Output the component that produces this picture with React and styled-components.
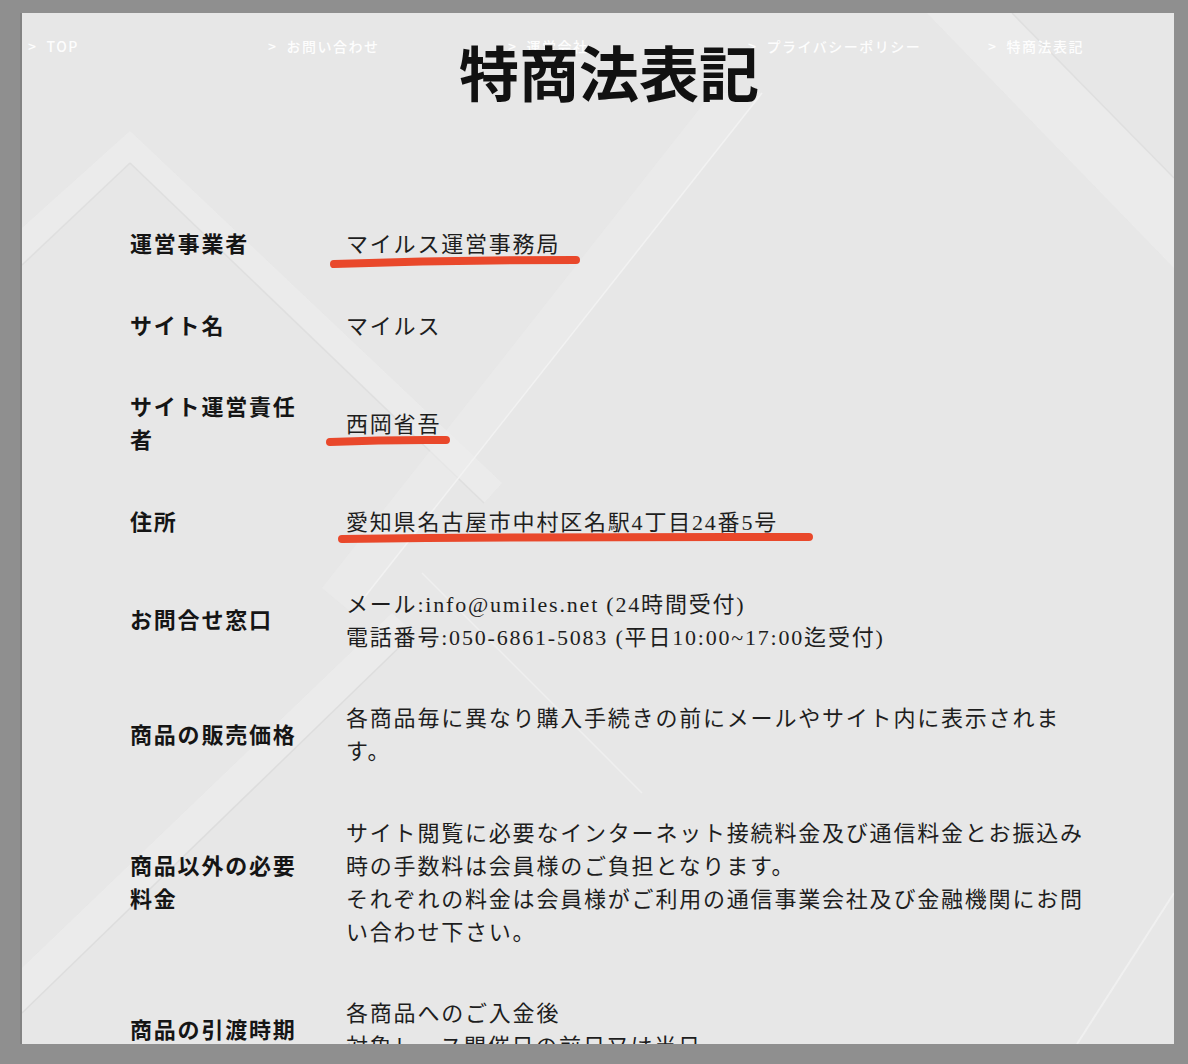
import React from 'react';
import styled, { createGlobalStyle } from 'styled-components';

const GlobalStyle = createGlobalStyle`
  html, body {
    margin: 0;
    padding: 0;
    background: #8f8f8f;
  }
  body {
    font-family: "Liberation Serif", "Noto Sans CJK JP", serif;
    color: #1c1c1c;
  }
`;

const Frame = styled.div`
  box-sizing: border-box;
  width: 1188px;
  height: 1064px;
  padding: 13px 14px 20px 22px;
`;

const Page = styled.div`
  position: relative;
  width: 1152px;
  height: 1031px;
  overflow: hidden;
  background: #e7e7e7;
  box-shadow: -2px 0 0 rgba(0, 0, 0, 0.08);
`;

const Backdrop = styled.svg`
  position: absolute;
  inset: 0;
  z-index: 0;
`;

const Nav = styled.nav`
  position: absolute;
  top: 22px;
  left: 0;
  z-index: 1;
  display: flex;
`;

const NavItem = styled.a`
  box-sizing: border-box;
  width: 240px;
  padding-left: 6px;
  font-family: "Noto Sans CJK JP", sans-serif;
  font-size: 14px;
  line-height: 22px;
  font-weight: 500;
  letter-spacing: 1.5px;
  color: rgba(255, 255, 255, 0.95);
  text-decoration: none;
`;

const Chevron = styled.span`
  margin-right: 9px;
`;

const Content = styled.main`
  position: relative;
  z-index: 2;
  padding-top: 28px;
`;

const Title = styled.h1`
  margin: 0 0 103px;
  padding-left: 22px;
  text-align: center;
  font-family: "Noto Sans CJK JP", sans-serif;
  font-size: 60px;
  line-height: 60px;
  font-weight: 700;
  color: #111;
`;

const Table = styled.dl`
  margin: 0 0 0 108px;
`;

const Row = styled.div`
  display: grid;
  grid-template-columns: 180px 748px;
  column-gap: 36px;
  align-items: center;
  padding: 24.3px 0;
  font-size: 22px;
  line-height: 33px;
  letter-spacing: 1.8px;
`;

const Label = styled.dt`
  margin: 0;
  font-weight: 700;
  color: #151515;
`;

const Value = styled.dd`
  position: relative;
  margin: 0;
  color: #1e1e1e;
`;

const Marker = styled.svg`
  position: absolute;
  left: ${p => p.$left}px;
  top: ${p => p.$top}px;
  overflow: visible;
  pointer-events: none;
`;

const Underline = ({ left, top, width, tilt = 1 }) => (
  <Marker $left={left} $top={top} width={width} height={12} viewBox={`0 0 ${width} 12`}>
    <path
      d={`M4 ${6 + tilt} Q ${width / 2} ${5 - tilt / 2} ${width - 4} ${6 - tilt}`}
      stroke="#e9482b"
      strokeWidth="8"
      strokeLinecap="round"
      fill="none"
    />
  </Marker>
);

const navLinks = ['TOP', 'お問い合わせ', '運営会社', 'プライバシーポリシー', '特商法表記'];

const rows = [
  { label: '運営事業者', value: ['マイルス運営事務局'], mark: { left: -16, top: 28, width: 250, tilt: 2 } },
  { label: 'サイト名', value: ['マイルス'] },
  { label: 'サイト運営責任者', value: ['西岡省吾'], mark: { left: -20, top: 27, width: 124, tilt: 1 } },
  { label: '住所', value: ['愛知県名古屋市中村区名駅4丁目24番5号'], mark: { left: -8, top: 26, width: 475, tilt: 1 } },
  {
    label: 'お問合せ窓口',
    value: ['メール:info@umiles.net (24時間受付)', '電話番号:050-6861-5083 (平日10:00~17:00迄受付)'],
  },
  { label: '商品の販売価格', value: ['各商品毎に異なり購入手続きの前にメールやサイト内に表示されます。'] },
  {
    label: '商品以外の必要料金',
    value: [
      'サイト閲覧に必要なインターネット接続料金及び通信料金とお振込み時の手数料は会員様のご負担となります。',
      'それぞれの料金は会員様がご利用の通信事業会社及び金融機関にお問い合わせ下さい。',
    ],
  },
  { label: '商品の引渡時期', value: ['各商品へのご入金後', '対象レース開催日の前日又は当日'] },
];

// soft diagonal panels behind the page
const Pattern = () => (
  <Backdrop width="1152" height="1031" viewBox="0 0 1152 1031">
    <polygon points="0,215 108,118 480,470 462,490 108,150 0,252" fill="#efefef" opacity="0.6" />
    <line x1="0" y1="252" x2="108" y2="150" stroke="#dddddd" strokeWidth="1.5" opacity="0.8" />
    <line x1="108" y1="150" x2="462" y2="490" stroke="#dddddd" strokeWidth="1.5" opacity="0.8" />
    <polygon points="690,80 740,80 330,600 300,575" fill="#ededed" opacity="0.5" />
    <line x1="740" y1="80" x2="330" y2="600" stroke="#f2f2f2" strokeWidth="1.5" />
    <polygon points="905,0 990,0 1152,165 1152,255" fill="#eeeeee" opacity="0.6" />
    <line x1="990" y1="0" x2="1152" y2="165" stroke="#dfdfdf" strokeWidth="1.5" />
    <line x1="1152" y1="880" x2="1055" y2="1031" stroke="#f0f0f0" strokeWidth="2" />
    <polygon points="0,955 370,600 392,620 0,1000" fill="#eeeeee" opacity="0.6" />
    <line x1="0" y1="1000" x2="392" y2="620" stroke="#dddddd" strokeWidth="1.5" />
    <line x1="400" y1="560" x2="620" y2="780" stroke="#efefef" strokeWidth="1.5" />
  </Backdrop>
);

export default function App() {
  return (
    <>
      <GlobalStyle />
      <Frame>
        <Page>
          <Pattern />
          <Nav>
            {navLinks.map(link => (
              <NavItem key={link} href="#">
                <Chevron>&gt;</Chevron>
                {link}
              </NavItem>
            ))}
          </Nav>
          <Content>
            <Title>特商法表記</Title>
            <Table>
              {rows.map(row => (
                <Row key={row.label}>
                  <Label>{row.label}</Label>
                  <Value>
                    {row.value.map((line, i) => (
                      <div key={i}>{line}</div>
                    ))}
                    {row.mark && <Underline {...row.mark} />}
                  </Value>
                </Row>
              ))}
            </Table>
          </Content>
        </Page>
      </Frame>
    </>
  );
}
